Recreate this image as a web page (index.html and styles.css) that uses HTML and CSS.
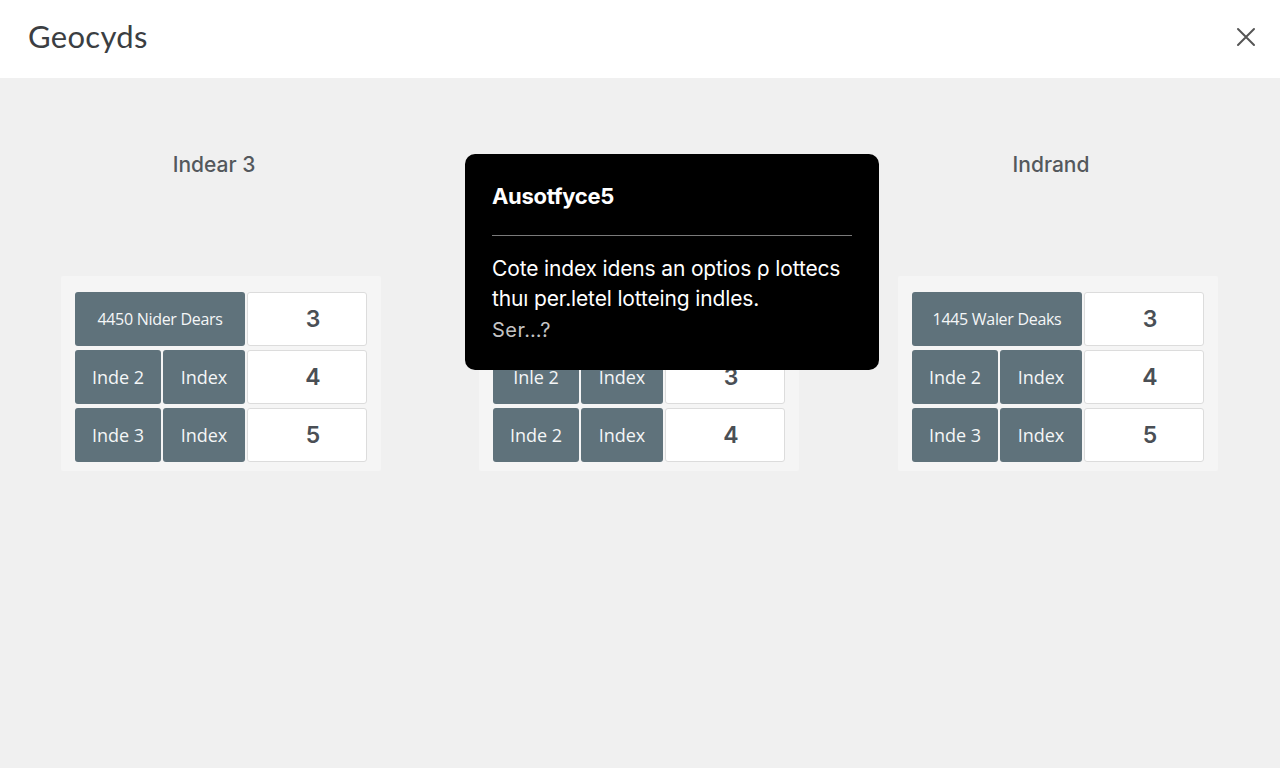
FILE: index.html
```html
<!DOCTYPE html>
<html lang="en">
<head>
<meta charset="utf-8">
<title>Geocyds</title>
<link rel="stylesheet" href="styles.css">
</head>
<body>
<header class="topbar">
  <h1 class="brand">Geocyds</h1>
  <button class="close" aria-label="Close">
    <svg width="20" height="20" viewBox="0 0 20 20"><path d="M2 2 L18 18 M18 2 L2 18" stroke="#555" stroke-width="2" stroke-linecap="round" fill="none"/></svg>
  </button>
</header>
<main class="board">
  <section class="column">
    <h2 class="col-title">Indear 3</h2>
    <div class="panel">
      <div class="grid">
        <div class="cell dark wide small">4450 Nider Dears</div>
        <div class="cell light">3</div>
        <div class="cell dark">Inde 2</div>
        <div class="cell dark">Index</div>
        <div class="cell light">4</div>
        <div class="cell dark">Inde 3</div>
        <div class="cell dark">Index</div>
        <div class="cell light">5</div>
      </div>
    </div>
  </section>
  <section class="column">
    <h2 class="col-title"></h2>
    <div class="panel">
      <div class="grid">
        <div class="cell dark wide small"></div>
        <div class="cell light"></div>
        <div class="cell dark">Inle 2</div>
        <div class="cell dark">Index</div>
        <div class="cell light">3</div>
        <div class="cell dark">Inde 2</div>
        <div class="cell dark">Index</div>
        <div class="cell light">4</div>
      </div>
    </div>
  </section>
  <section class="column">
    <h2 class="col-title">Indrand</h2>
    <div class="panel">
      <div class="grid">
        <div class="cell dark wide small">1445 Waler Deaks</div>
        <div class="cell light">3</div>
        <div class="cell dark">Inde 2</div>
        <div class="cell dark">Index</div>
        <div class="cell light">4</div>
        <div class="cell dark">Inde 3</div>
        <div class="cell dark">Index</div>
        <div class="cell light">5</div>
      </div>
    </div>
  </section>
  <div class="tooltip">
    <div class="tip-title">Ausotfyce5</div>
    <div class="tip-rule"></div>
    <p class="tip-text">Cote index idens an optios ρ lottecs thuı per.letel lotteing indles.</p>
    <p class="tip-more">Ser…?</p>
  </div>
</main>
</body>
</html>
```
FILE: styles.css
```css
* { box-sizing: border-box; }
html, body { margin: 0; padding: 0; }
body {
  width: 1280px;
  height: 768px;
  background: #f0f0f0;
  font-family: "Open Sans", "Noto Sans", sans-serif;
  overflow: hidden;
}
.topbar {
  height: 78px;
  background: #ffffff;
  display: flex;
  align-items: center;
  justify-content: space-between;
  padding: 0 24px 6px 28px;
}
.brand {
  margin: 0;
  font-family: Lato, "Open Sans", sans-serif;
  font-weight: 400;
  font-size: 31px;
  line-height: 36px;
  color: #3b3e42;
  letter-spacing: 0.3px;
}
.close {
  background: none;
  border: 0;
  padding: 0;
  width: 20px;
  height: 20px;
  display: flex;
  cursor: pointer;
  margin-top: 2px;
}
.board {
  position: relative;
  display: flex;
  gap: 98px;
  padding: 75px 61px 0 61px;
  height: 690px;
}
.column {
  width: 320px;
  display: flex;
  flex-direction: column;
  align-items: center;
}
.column:last-of-type { margin-left: 1px; }
.col-title {
  margin: 0 0 99px;
  height: 24px;
  line-height: 24px;
  font-family: Inter, "Open Sans", sans-serif;
  font-size: 21px;
  font-weight: 500;
  color: #54585c;
  padding-right: 14px;
}
.panel {
  width: 320px;
  background: #f5f5f5;
  padding: 16px 14px 9px;
  border-radius: 2px;
}
.grid {
  display: grid;
  grid-template-columns: 86px 82px 120px;
  grid-auto-rows: 54px;
  column-gap: 2px;
  row-gap: 4px;
}
.cell {
  display: flex;
  align-items: center;
  justify-content: center;
  border-radius: 3px;
}
.dark {
  background: #5f727b;
  color: #f4f6f7;
  font-size: 18px;
}
.wide { grid-column: span 2; }
.small { font-size: 16px; letter-spacing: -0.3px; }
.light {
  background: #ffffff;
  border: 1px solid #dcdcdc;
  color: #4a4f55;
  font-family: Inter, "Open Sans", sans-serif;
  font-size: 23px;
  font-weight: 600;
  padding-left: 12px;
}
.tooltip {
  position: absolute;
  left: 465px;
  top: 76px;
  width: 414px;
  height: 216px;
  background: #000000;
  border-radius: 10px;
  padding: 28px 27px 0;
  color: #ffffff;
  font-family: Inter, "Open Sans", sans-serif;
}
.tip-title {
  font-size: 22px;
  font-weight: 700;
  line-height: 28px;
  letter-spacing: -0.3px;
}
.tip-rule {
  margin-top: 25px;
  height: 1px;
  background: #7a7a7a;
}
.tip-text {
  margin: 18px 0 0;
  font-size: 21px;
  line-height: 30px;
  letter-spacing: -0.15px;
}
.tip-more {
  margin: 1px 0 0;
  font-size: 20px;
  line-height: 30px;
  color: #c4c4c4;
  letter-spacing: 0.5px;
}
```
